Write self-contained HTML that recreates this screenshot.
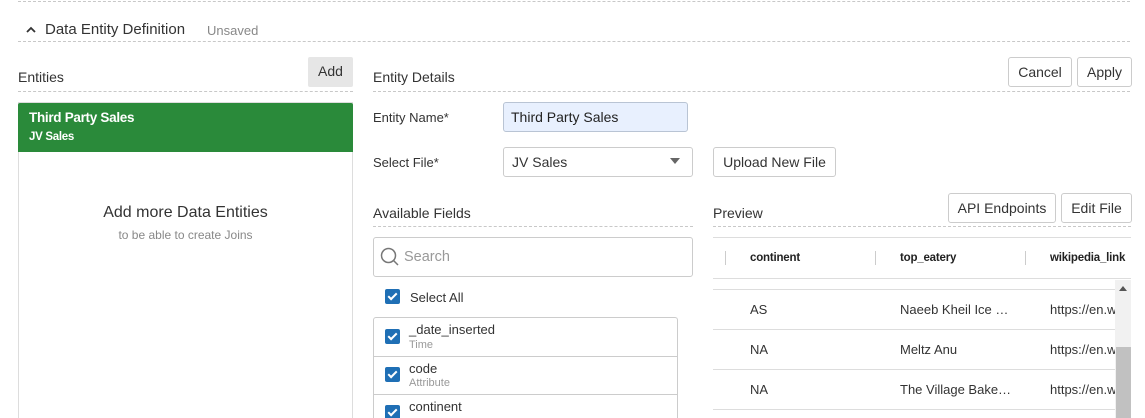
<!DOCTYPE html>
<html><head><meta charset="utf-8"><style>
*{box-sizing:border-box;margin:0;padding:0}
html,body{width:1145px;height:418px;overflow:hidden}
body{background:#fff;font-family:"Liberation Sans",sans-serif;color:#333;position:relative}
.a{position:absolute;white-space:nowrap}
.dash{position:absolute;height:0;border-top:1px dashed #c8c8c8}
.btn{position:absolute;border:1px solid #ccc;border-radius:3px;background:#fff;font-size:14px;color:#333;text-align:center;line-height:28px}
.lbl{font-size:13.5px;color:#333}
.cb{position:absolute;width:15px;height:15px;background:#1f6fb5;border-radius:2px}
.cb:after{content:"";position:absolute;left:5px;top:2px;width:3px;height:7px;border:solid #fff;border-width:0 2px 2px 0;transform:rotate(45deg)}
.hl{position:absolute;left:713px;width:402px;height:0;border-top:1px solid #ddd}
.td{font-size:13px;color:#333}
.th{font-size:11.5px;font-weight:bold;color:#222;letter-spacing:-0.2px}
</style></head><body>
<div class="dash" style="left:18px;top:1px;width:1112px"></div>
<svg class="a" style="left:25px;top:25px" width="12" height="10"><path d="M2 7 L6 3 L10 7" stroke="#333" stroke-width="1.8" fill="none"/></svg>
<div class="a" style="left:45px;top:21px;font-size:15px;color:#333">Data Entity Definition</div>
<div class="a" style="left:207px;top:23px;font-size:13px;color:#888">Unsaved</div>
<div class="dash" style="left:18px;top:41px;width:1112px"></div>

<div class="a lbl" style="left:18px;top:69px;font-size:14px">Entities</div>
<div class="a" style="left:308px;top:57px;width:45px;height:30px;background:#e6e6e6;border-radius:2px;font-size:14px;text-align:center;line-height:29px;color:#333">Add</div>
<div class="dash" style="left:18px;top:91px;width:335px"></div>
<div class="a" style="left:18px;top:102px;width:335px;height:316px;border:1px solid #ddd;border-bottom:none"></div>
<div class="a" style="left:18px;top:103px;width:335px;height:49px;background:#2a8a3a;border-radius:2px 2px 0 0"></div>
<div class="a" style="left:29px;top:110px;font-size:13.5px;font-weight:bold;color:#fff;letter-spacing:-0.3px">Third Party Sales</div>
<div class="a" style="left:29px;top:131px;font-size:11.5px;font-weight:bold;color:#fff;letter-spacing:-0.3px">JV Sales</div>
<div class="a" style="left:18px;top:204px;width:335px;text-align:center;font-size:16px;color:#333">Add more Data Entities</div>
<div class="a" style="left:18px;top:228px;width:335px;text-align:center;font-size:12px;color:#888">to be able to create Joins</div>

<div class="a lbl" style="left:373px;top:69px;font-size:14px">Entity Details</div>
<div class="btn" style="left:1008px;top:57px;width:64px;height:30px">Cancel</div>
<div class="btn" style="left:1077px;top:57px;width:55px;height:30px">Apply</div>
<div class="dash" style="left:373px;top:91px;width:757px"></div>

<div class="a lbl" style="left:373px;top:110px;font-size:13px">Entity Name*</div>
<div class="a" style="left:503px;top:102px;width:185px;height:30px;background:#e8f0fe;border:1px solid #b9c4d4;border-radius:3px;font-size:14px;line-height:28px;padding-left:7px;color:#222">Third Party Sales</div>
<div class="a lbl" style="left:373px;top:155px;font-size:13px">Select File*</div>
<div class="a" style="left:503px;top:147px;width:190px;height:30px;border:1px solid #ccc;border-radius:3px;font-size:14px;line-height:28px;padding-left:8px;color:#333">JV Sales</div>
<svg class="a" style="left:670px;top:158px" width="10" height="6"><path d="M0 0 L10 0 L5 6Z" fill="#666"/></svg>
<div class="btn" style="left:713px;top:147px;width:123px;height:30px">Upload New File</div>

<div class="a lbl" style="left:373px;top:205px;font-size:14px">Available Fields</div>
<div class="dash" style="left:373px;top:226px;width:320px"></div>
<div class="a" style="left:373px;top:237px;width:320px;height:40px;border:1px solid #ccc;border-radius:3px"></div>
<svg class="a" style="left:380px;top:247px" width="20" height="20"><circle cx="8.5" cy="8.5" r="7" stroke="#777" stroke-width="1.5" fill="none"/><path d="M13.5 13.5 L18 18" stroke="#777" stroke-width="1.5"/></svg>
<div class="a" style="left:404px;top:249px;font-size:14.5px;color:#999">Search</div>
<div class="cb" style="left:385px;top:289px"></div>
<div class="a" style="left:410px;top:290px;font-size:13px;color:#333">Select All</div>
<div class="a" style="left:373px;top:317px;width:305px;height:101px;border:1px solid #ccc;border-bottom:none;border-radius:3px 3px 0 0"></div>
<div class="a" style="left:374px;top:356px;width:303px;border-top:1px solid #ccc"></div>
<div class="a" style="left:374px;top:394px;width:303px;border-top:1px solid #ccc"></div>
<div class="cb" style="left:385px;top:329px"></div>
<div class="a" style="left:409px;top:322px;font-size:13px">_date_inserted</div>
<div class="a" style="left:409px;top:339px;font-size:11px;color:#999">Time</div>
<div class="cb" style="left:385px;top:367px"></div>
<div class="a" style="left:409px;top:361px;font-size:13px">code</div>
<div class="a" style="left:409px;top:377px;font-size:11px;color:#999">Attribute</div>
<div class="cb" style="left:385px;top:405px"></div>
<div class="a" style="left:409px;top:399px;font-size:13px">continent</div>

<div class="a lbl" style="left:713px;top:205px;font-size:14px">Preview</div>
<div class="btn" style="left:948px;top:193px;width:108px;height:30px">API Endpoints</div>
<div class="btn" style="left:1061px;top:193px;width:71px;height:30px">Edit File</div>
<div class="dash" style="left:713px;top:226px;width:418px"></div>
<div class="hl" style="top:237px;width:418px"></div>
<div class="a" style="left:725px;top:251px;height:14px;border-left:1px solid #ccc"></div>
<div class="a" style="left:875px;top:251px;height:14px;border-left:1px solid #ccc"></div>
<div class="a" style="left:1025px;top:251px;height:14px;border-left:1px solid #ccc"></div>
<div class="a th" style="left:750px;top:252px">continent</div>
<div class="a th" style="left:900px;top:252px">top_eatery</div>
<div class="a th" style="left:1050px;top:252px">wikipedia_link</div>
<div class="hl" style="top:278px;width:418px"></div>
<div class="hl" style="top:289px"></div>
<div class="a td" style="left:750px;top:302px">AS</div>
<div class="a td" style="left:900px;top:302px">Naeeb Kheil Ice …</div>
<div class="a td" style="left:1050px;top:302px">https://en.w</div>
<div class="hl" style="top:329px"></div>
<div class="a td" style="left:750px;top:342px">NA</div>
<div class="a td" style="left:900px;top:342px">Meltz Anu</div>
<div class="a td" style="left:1050px;top:342px">https://en.w</div>
<div class="hl" style="top:369px"></div>
<div class="a td" style="left:750px;top:382px">NA</div>
<div class="a td" style="left:900px;top:382px">The Village Bake…</div>
<div class="a td" style="left:1050px;top:382px">https://en.w</div>
<div class="hl" style="top:409px"></div>
<div class="a" style="left:1115px;top:280px;width:16px;height:138px;background:#f1f1f1"></div>
<svg class="a" style="left:1119px;top:286px" width="8" height="5"><path d="M0 5 L4 0 L8 5Z" fill="#555"/></svg>
<div class="a" style="left:1116px;top:347px;width:15px;height:71px;background:#c1c1c1"></div>
</body></html>
